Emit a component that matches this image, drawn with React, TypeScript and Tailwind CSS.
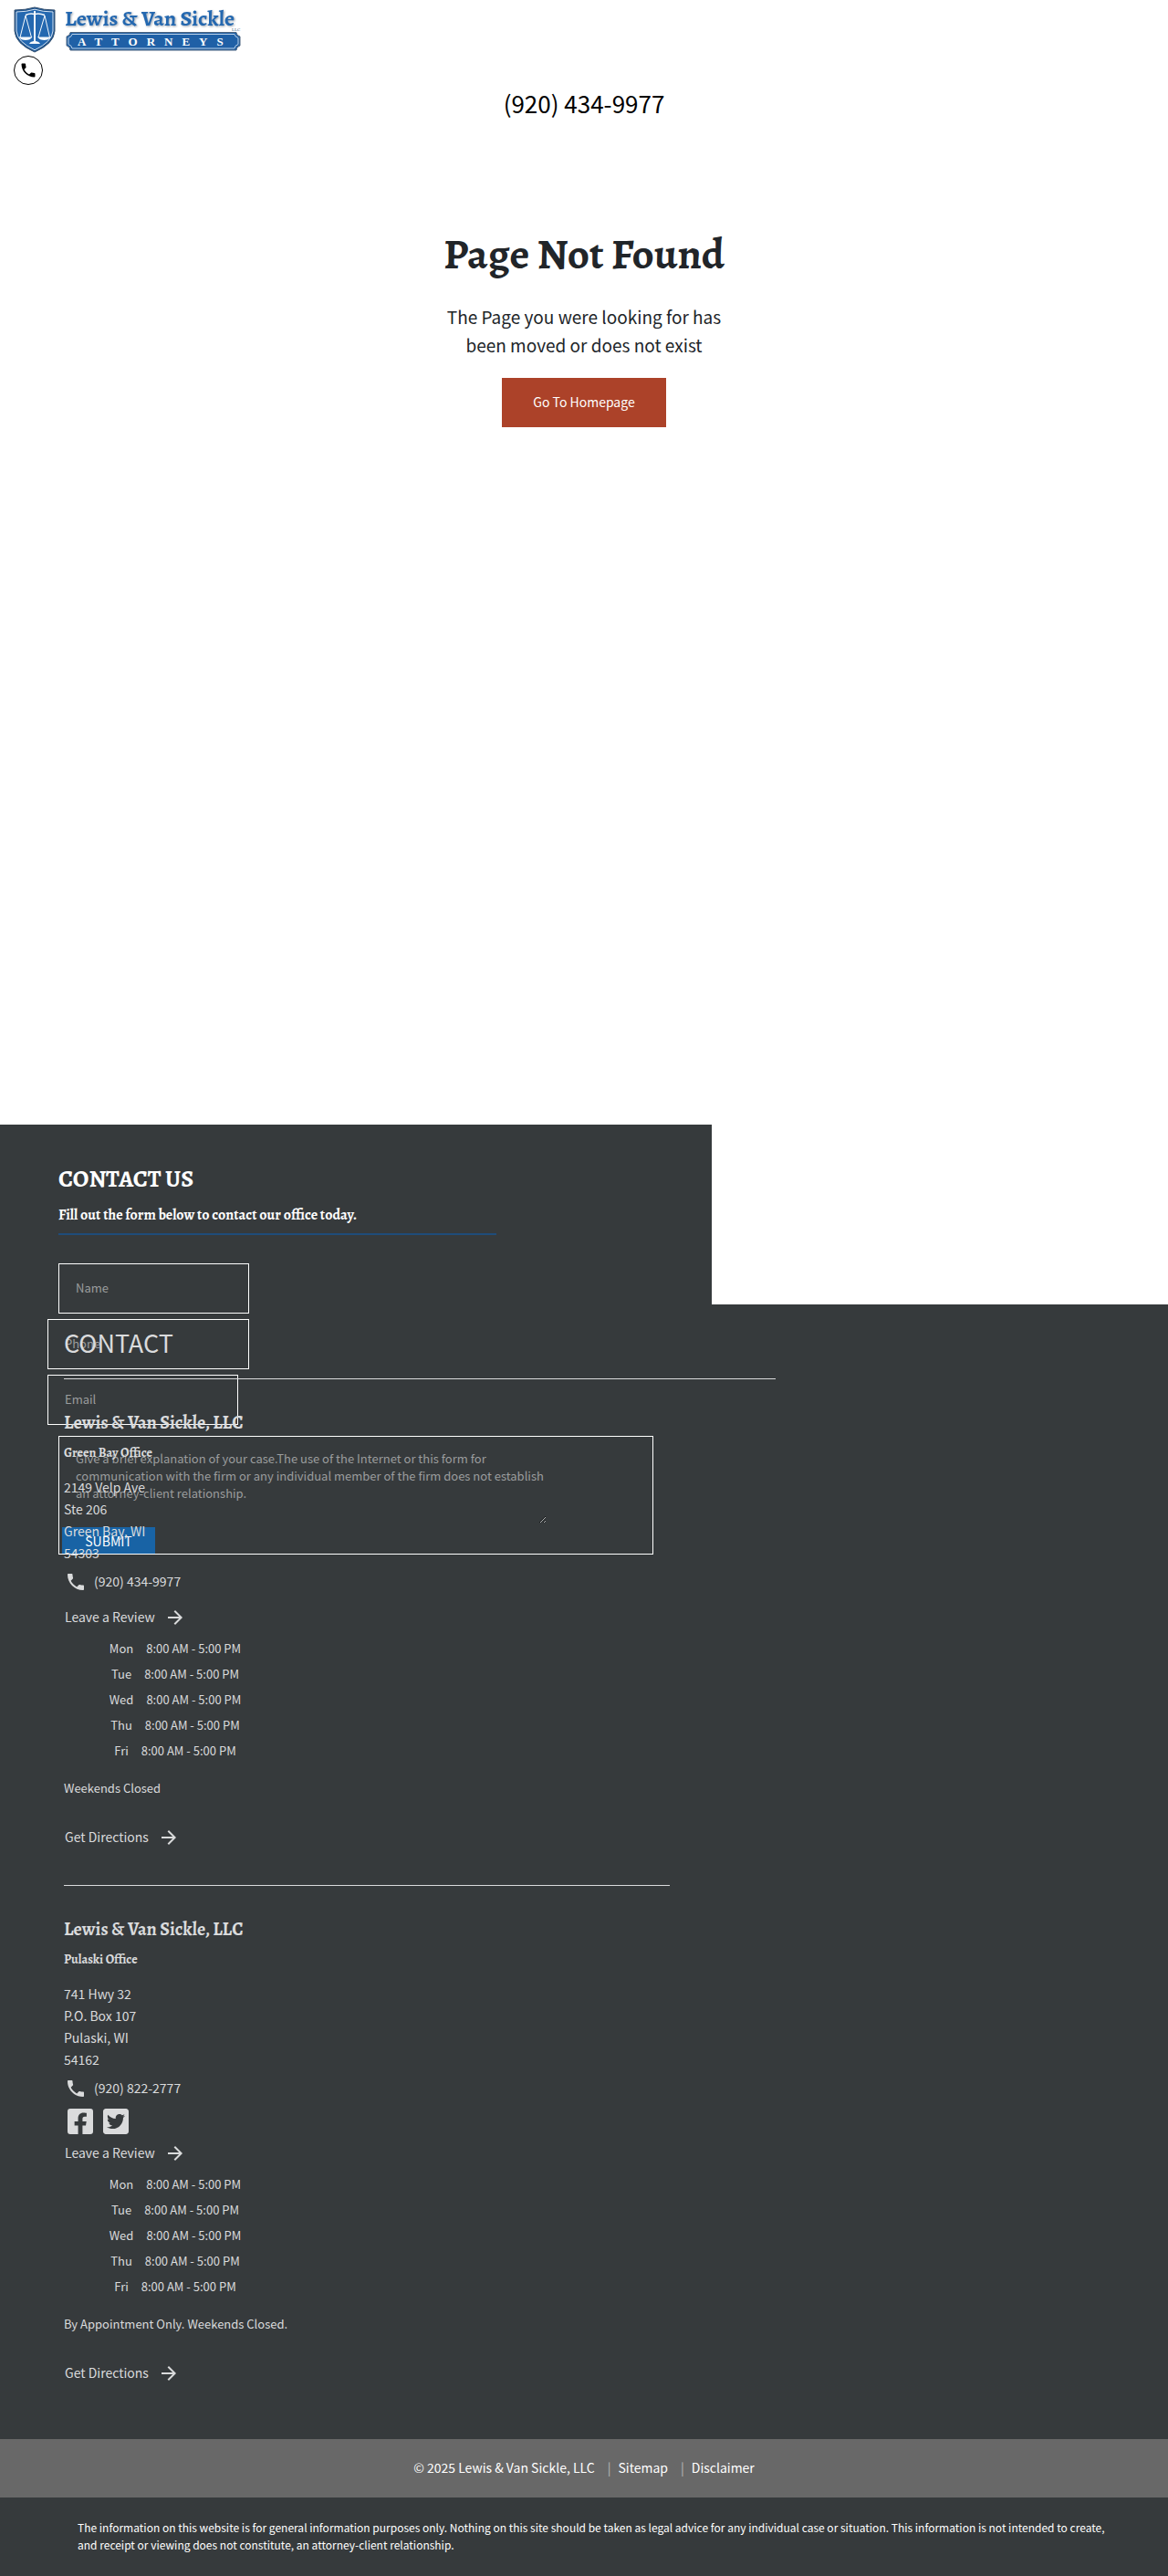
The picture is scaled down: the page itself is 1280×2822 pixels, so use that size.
import React from "react";
import { MdArrowForward, MdPhone } from "react-icons/md";
import { FaFacebookSquare, FaTwitterSquare } from "react-icons/fa";

const SANS = "font-['Noto_Sans_CJK_SC',sans-serif]";
const SERIF = "font-['Alegreya','Liberation_Serif',serif]";

const HOURS = ["Mon", "Tue", "Wed", "Thu", "Fri"];

type OfficeProps = {
  name: string;
  address: string[];
  phone: string;
  note: string;
  social?: boolean;
};

function Logo() {
  return (
    <a href="#home" aria-label="Lewis & Van Sickle, LLC Attorneys" className="block w-[250px]">
      <svg viewBox="0 0 250 52" className="block w-full">
        <path d="M1 4 Q13 4 23 1 Q33 4 45 4 V27 Q44 41 23 50 Q2 41 1 27 Z" fill="#1d5591" stroke="#3b5573" strokeWidth="1" />
        <path d="M3 6 Q14 6 23 3.200 Q32 6 43 6 V27 Q42 39 23 47.800 Q4 39 3 27 Z" fill="#2468b0" stroke="#d5e3f2" strokeWidth="1" />
        <g fill="none" stroke="#f4f8fc" strokeWidth="1">
          <path d="M13 9.500 Q18 7 23 8.500 Q28 7 34 9.500" strokeWidth="1.500" />
          <path d="M23 5 V38" strokeWidth="2" />
          <path d="M13 10 L7 34 M13 10 L19.500 34 M34 10 L27 34 M34 10 L39.500 34" />
        </g>
        <g fill="#f4f8fc">
          <path d="M5.500 33.500 H20.500 Q18 37 13 37 Q8 37 5.500 33.500Z M26 33.500 H41 Q38 37 33.500 37 Q28.500 37 26 33.500Z" />
          <path d="M17 41 Q18 38.500 22 38 H24 Q28 38.500 29 41Z" />
        </g>
        <text
          x="56"
          y="21"
          fontFamily="Alegreya, 'Liberation Serif', serif"
          fontSize="24"
          fontWeight="700"
          fill="#2468b0"
          style={{ filter: "drop-shadow(1px 1px 1px #9aa3ae)" }}
        >
          Lewis &amp; Van Sickle
        </text>
        <text x="239" y="27" fontFamily="'Liberation Serif', serif" fontSize="5" fill="#4a6688">LLC</text>
        <path d="M62 28.500 H244 Q244 32 248 33 V43 Q244 44 244 48 H62 Q62 44 58 43 V33 Q62 32 62 28.500Z" fill="#1f60a6" stroke="#4c6480" strokeWidth="1" />
        <path d="M64 30.500 H242 Q242 33 246 34.500 V41.500 Q242 43 242 46 H64 Q64 43 60 41.500 V34.500 Q64 33 64 30.500Z" fill="none" stroke="#b9d0e8" strokeWidth="1" />
        <text x="70" y="43" fontFamily="'Liberation Serif', serif" fontSize="13" fontWeight="700" fill="#ffffff" letterSpacing="10">ATTORNEYS</text>
      </svg>
    </a>
  );
}

function ArrowLink({ label }: { label: string }) {
  return (
    <a href="#office" className="flex w-fit items-center gap-2.5 pl-px text-[14px] leading-6">
      {label}
      <MdArrowForward className="mt-0.5 size-6" />
    </a>
  );
}

function Office({ name, address, phone, note, social }: OfficeProps) {
  return (
    <section className="pt-9">
      <h3 className={`${SERIF} text-[20px] font-bold leading-6`}>Lewis &amp; Van Sickle, LLC</h3>
      <h4 className={`${SERIF} mt-[11px] text-[14px] font-bold leading-5`}>{name}</h4>
      <address className="mt-[15px] text-[14px] leading-6 not-italic">
        {address.map((line) => (
          <span key={line} className="block">{line}</span>
        ))}
      </address>
      <a href="#call" className="mt-1.5 flex w-fit items-center gap-2 pl-px text-[14px] leading-6">
        <MdPhone className="mt-0.5 size-6" />
        {phone}
      </a>
      {social ? (
        <div className="mt-2 flex gap-[7px] pl-0.5">
          <a href="#facebook" aria-label="Facebook"><FaFacebookSquare className="size-8" /></a>
          <a href="#twitter" aria-label="Twitter"><FaTwitterSquare className="size-8" /></a>
        </div>
      ) : null}
      <div className={social ? "mt-[5px]" : "mt-[13px]"}>
        <ArrowLink label="Leave a Review" />
      </div>
      <ul className="mt-2 w-[244px] text-[13px] leading-7">
        {HOURS.map((day) => (
          <li key={day} className="flex justify-center gap-3.5">
            <span>{day}</span>
            <span>8:00 AM - 5:00 PM</span>
          </li>
        ))}
      </ul>
      <p className="mt-[15px] text-[13px] leading-6">{note}</p>
      <div className="mt-7">
        <ArrowLink label="Get Directions" />
      </div>
    </section>
  );
}

const FIELD =
  "block h-[55px] border border-white bg-transparent px-[18px] pb-0.5 text-[13px] text-white outline-none placeholder:text-[#9b9d9e]";

function ContactForm() {
  return (
    <section className="relative z-10 -mb-[274px] w-[780px] max-w-full bg-[#363a3c] px-16 pt-11">
      <h2 className={`${SERIF} text-[26px] font-bold leading-8 text-white`}>CONTACT US</h2>
      <p className={`${SERIF} mt-[11px] text-[16px] font-bold leading-6 text-white`}>
        Fill out the form below to contact our office today.
      </p>
      <hr className="mt-2 w-[480px] max-w-full border-0 border-t-2 border-[#1f4c7a]" />
      <form className="mt-[31px]" onSubmit={(e) => e.preventDefault()}>
        <input aria-label="Name" placeholder="Name" className={`${FIELD} w-[209px]`} />
        <input aria-label="Phone" placeholder="Phone" className={`${FIELD} mt-1.5 -ml-3 w-[221px]`} />
        <input aria-label="Email" placeholder="Email" className={`${FIELD} mt-1.5 -ml-3 w-[209px]`} />
        <div className="mt-3 border border-white pt-3.5">
          <textarea
            aria-label="Message"
            placeholder="Give a brief explanation of your case.The use of the Internet or this form for communication with the firm or any individual member of the firm does not establish an attorney-client relationship."
            className="ml-[18px] block h-[81px] w-[516px] max-w-full resize bg-transparent text-[13px] leading-[19px] text-white outline-none placeholder:text-[#9b9d9e]"
          />
          <button type="submit" className="mt-1 ml-[3px] block h-[29px] w-[102px] bg-[#1863a5] text-[14px] leading-6 text-white">
            SUBMIT
          </button>
        </div>
      </form>
    </section>
  );
}

export default function App() {
  return (
    <div className={`${SANS} bg-white text-[#212529]`}>
      <header className="px-[15px] pt-[7px]">
        <Logo />
        <a href="#call" aria-label="Call us" className="mt-0.5 flex size-8 items-center justify-center rounded-full border border-black text-black">
          <MdPhone className="size-5" />
        </a>
        <a href="#call" className="mx-auto block w-fit text-[26px] leading-10 text-black">(920) 434-9977</a>
      </header>

      <main className="flex min-h-[1099px] flex-col items-center pt-[115px] text-center">
        <h1 className={`${SERIF} text-[47px] font-bold leading-[60px]`}>Page Not Found</h1>
        <p className="mt-[23px] w-[320px] text-[19px] leading-[31px]">
          The Page you were looking for has been moved or does not exist
        </p>
        <a href="#home" className="mt-[21px] flex h-[54px] w-[180px] items-center justify-center bg-[#ac4229] pb-0.5 text-[14px] text-white">
          Go To Homepage
        </a>
      </main>

      <ContactForm />

      <footer className="bg-[#363a3c]">
        <div className="relative z-20 px-[70px] pt-[22px] pb-[60px] text-[#dadbdc]">
          <h2 className="text-[27px] leading-10">CONTACT</h2>
          <hr className="mt-[19px] w-[780px] max-w-full border-[#dadbdc]" />
          <Office
            name="Green Bay Office"
            address={["2149 Velp Ave", "Ste 206", "Green Bay, WI", "54303"]}
            phone="(920) 434-9977"
            note="Weekends Closed"
          />
          <hr className="mt-10 w-[664px] max-w-full border-[#dadbdc]" />
          <Office
            name="Pulaski Office"
            address={["741 Hwy 32", "P.O. Box 107", "Pulaski, WI", "54162"]}
            phone="(920) 822-2777"
            note="By Appointment Only. Weekends Closed."
            social
          />
        </div>
        <div className="flex min-h-16 items-center justify-center bg-[#686868] pb-0.5 text-[14px] text-white">
          <span>© 2025 Lewis &amp; Van Sickle, LLC</span>
          <span className="ml-3.5 text-[#bbbbbb]">|</span>
          <a href="#sitemap" className="ml-2">Sitemap</a>
          <span className="ml-3.5 text-[#bbbbbb]">|</span>
          <a href="#disclaimer" className="ml-2">Disclaimer</a>
        </div>
        <div className="pt-[23px] pr-[50px] pb-[25px] pl-[85px]">
          <p className="text-[12px] leading-[19px] text-white">
            The information on this website is for general information purposes only. Nothing on this site should be taken as legal advice for any individual case or situation. This information is not intended to create, and receipt or viewing does not constitute, an attorney-client relationship.
          </p>
        </div>
      </footer>
    </div>
  );
}
